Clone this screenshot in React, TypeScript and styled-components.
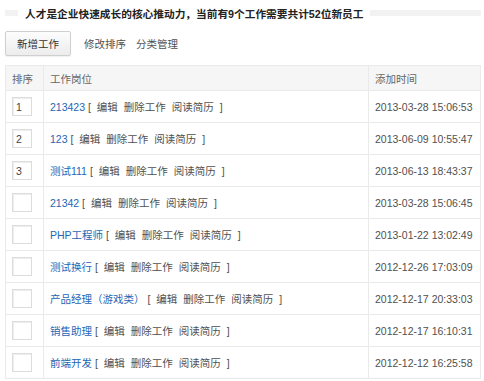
import React from "react";
import styled, { createGlobalStyle } from "styled-components";

const GlobalStyle = createGlobalStyle`
	body {
		margin: 0;
		background: #fff;
		font-family: "Liberation Sans", "Noto Sans CJK SC", sans-serif;
		font-size: 10.5px;
		color: #505050;
	}
`;

const Page = styled.div`
	width: 476px;
	padding: 4px 4px 0 5px;
`;

const TitleLine = styled.div`
	display: flex;
	align-items: center;
	gap: 7px;
	height: 18px;
`;

const TitleBar = styled.div<{ $grow?: boolean }>`
	height: 6px;
	background: #f2f2f2;
	width: ${(p) => (p.$grow ? "auto" : "13px")};
	flex: ${(p) => (p.$grow ? "1" : "none")};
`;

const Title = styled.h1`
	margin: 0;
	font-size: 10.7px;
	font-weight: bold;
	color: #222;
	white-space: nowrap;
`;

const Toolbar = styled.div`
	display: flex;
	align-items: center;
	gap: 10px;
	margin-top: 9px;
`;

const AddButton = styled.button`
	width: 66px;
	height: 25px;
	margin-right: 3px;
	padding: 0;
	border: 1px solid #cfcfcf;
	border-radius: 2px;
	background: linear-gradient(#fdfdfd, #ececec);
	box-shadow: 0 1px 1px rgba(0, 0, 0, 0.06);
	font: inherit;
	color: #333;
`;

const ToolLink = styled.a`
	color: #505050;
	text-decoration: none;
`;

const Table = styled.table`
	margin-top: 9px;
	width: 476px;
	border-collapse: collapse;
	border: 1px solid #eaeaea;
`;

const HeadCell = styled.th<{ $w?: number }>`
	height: 24px;
	padding: 0 6px;
	background: #f6f6f6;
	border: 1px solid #eaeaea;
	text-align: left;
	font-weight: normal;
	color: #666;
	width: ${(p) => (p.$w ? `${p.$w}px` : "auto")};
`;

const Cell = styled.td`
	height: 31px;
	padding: 0 6px;
	border: 1px solid #eaeaea;
	white-space: nowrap;
`;

const OrderInput = styled.input`
	display: block;
	box-sizing: border-box;
	width: 20px;
	height: 19px;
	padding: 0 0 0 3px;
	border: 1px solid #dcdcdc;
	box-shadow: inset 1px 1px 1px #eee;
	font: inherit;
	color: #444;
`;

const JobLink = styled.a`
	color: #2466b5;
	text-decoration: none;
`;

const Actions = styled.span`
	color: #505050;

	a {
		color: #505050;
		text-decoration: none;
		margin: 0 3px;
	}
`;

const jobs = [
	{ order: "1", name: "213423", time: "2013-03-28 15:06:53" },
	{ order: "2", name: "123", time: "2013-06-09 10:55:47" },
	{ order: "3", name: "测试111", time: "2013-06-13 18:43:37" },
	{ order: "", name: "21342", time: "2013-03-28 15:06:45" },
	{ order: "", name: "PHP工程师", time: "2013-01-22 13:02:49" },
	{ order: "", name: "测试换行", time: "2012-12-26 17:03:09" },
	{ order: "", name: "产品经理（游戏类）", time: "2012-12-17 20:33:03" },
	{ order: "", name: "销售助理", time: "2012-12-17 16:10:31" },
	{ order: "", name: "前端开发", time: "2012-12-12 16:25:58" },
];

export default function App() {
	return (
		<Page>
			<GlobalStyle />
			<TitleLine>
				<TitleBar />
				<Title>人才是企业快速成长的核心推动力，当前有9个工作需要共计52位新员工</Title>
				<TitleBar $grow />
			</TitleLine>
			<Toolbar>
				<AddButton>新增工作</AddButton>
				<ToolLink href="#">修改排序</ToolLink>
				<ToolLink href="#">分类管理</ToolLink>
			</Toolbar>
			<Table>
				<thead>
					<tr>
						<HeadCell $w={25}>排序</HeadCell>
						<HeadCell>工作岗位</HeadCell>
						<HeadCell $w={99}>添加时间</HeadCell>
					</tr>
				</thead>
				<tbody>
					{jobs.map((job) => (
						<tr key={job.name}>
							<Cell>
								<OrderInput defaultValue={job.order} />
							</Cell>
							<Cell>
								<JobLink href="#">{job.name}</JobLink>
								<Actions>
									{" [ "}
									<a href="#">编辑</a>
									<a href="#">删除工作</a>
									<a href="#">阅读简历</a>
									{" ]"}
								</Actions>
							</Cell>
							<Cell>{job.time}</Cell>
						</tr>
					))}
				</tbody>
			</Table>
		</Page>
	);
}
